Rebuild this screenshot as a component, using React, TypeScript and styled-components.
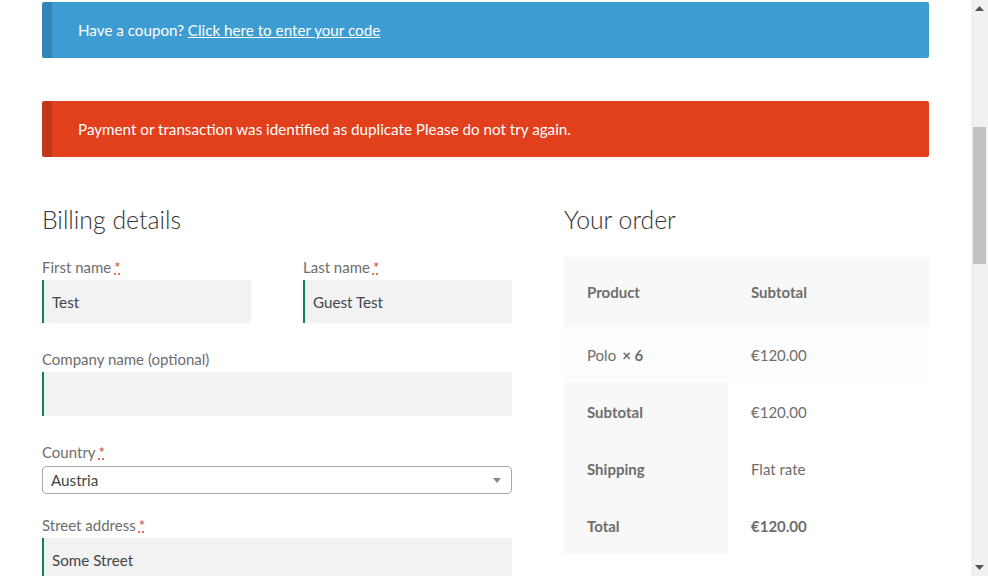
import React from "react";
import styled, { createGlobalStyle } from "styled-components";

const Global = createGlobalStyle`
  html, body { margin: 0; padding: 0; height: 100%; overflow: hidden; background: #fff; }
  body { font-family: Lato, "Liberation Sans", sans-serif; color: #6d6d6d; font-size: 15px; }
  #root { height: 100%; }
`;

const Shell = styled.div`
  display: flex;
  height: 576px;
  width: 988px;
`;

const Page = styled.main`
  flex: 1;
  padding: 2px 42px 0 42px;
  overflow: hidden;
`;

const ScrollTrack = styled.div`
  width: 17px;
  background: #f1f1f1;
  display: flex;
  flex-direction: column;
  align-items: center;
`;

const ScrollArrow = styled.div`
  height: 17px;
  width: 17px;
  display: flex;
  align-items: center;
  justify-content: center;
`;

const ScrollSpace = styled.div<{ $h: number }>`
  height: ${(p) => p.$h}px;
  flex: ${(p) => (p.$h ? "none" : 1)};
`;

const ScrollThumb = styled.div`
  width: 13px;
  height: 137px;
  background: #c1c1c1;
`;

const Notice = styled.div<{ $tone: "info" | "error" }>`
  background: ${(p) => (p.$tone === "info" ? "#3d9cd2" : "#e2401c")};
  border-left: 10px solid ${(p) => (p.$tone === "info" ? "#3485b3" : "#c0361a")};
  border-radius: 2px;
  color: #fff;
  height: 56px;
  box-sizing: border-box;
  padding: 0 26px;
  display: flex;
  align-items: center;
  font-size: 15.2px;
  margin-bottom: ${(p) => (p.$tone === "info" ? "43px" : "0")};
  a { color: #fff; text-decoration: underline; }
`;

const Columns = styled.div`
  display: flex;
  gap: 52px;
  margin-top: 46px;
`;

const BillingCol = styled.section`
  width: 470px;
`;

const OrderCol = styled.section`
  width: 365px;
`;

const Heading = styled.h3`
  margin: 0 0 18px 0;
  font-weight: 300;
  font-size: 24.8px;
  line-height: 33px;
  color: #333333;
`;

const RowPair = styled.div`
  display: flex;
  justify-content: space-between;
`;

const Field = styled.div<{ $w?: number; $mb?: number }>`
  width: ${(p) => (p.$w ? `${p.$w}px` : "100%")};
  margin-bottom: ${(p) => (p.$mb ?? 23)}px;
`;

const Label = styled.label`
  display: block;
  line-height: 26px;
  font-size: 15px;
  color: #6d6d6d;
`;

const Req = styled.abbr`
  color: #e2401c;
  text-decoration: underline dotted;
  margin-left: 3px;
  cursor: help;
`;

const Input = styled.div<{ $h?: number }>`
  height: ${(p) => p.$h ?? 43}px;
  background: #f2f2f2;
  box-shadow: inset 2px 0 0 #0f834d;
  color: #43454b;
  padding-left: 10px;
  display: flex;
  align-items: center;
  font-size: 15.2px;
`;

const Select = styled.div`
  margin-top: 1px;
  height: 28px;
  box-sizing: border-box;
  border: 1px solid #aaa;
  border-radius: 4px;
  background: #fff;
  color: #444;
  padding: 0 8px;
  display: flex;
  align-items: center;
  justify-content: space-between;
  font-size: 15.2px;
`;

const Caret = styled.span`
  width: 0;
  height: 0;
  border-left: 4px solid transparent;
  border-right: 4px solid transparent;
  border-top: 5px solid #888;
  margin-right: 2px;
`;

const Table = styled.table`
  width: 365px;
  border-collapse: collapse;
  margin-top: 21px;
  font-size: 15px;
  color: #6d6d6d;
`;

const HeadCell = styled.th<{ $w?: number }>`
  background: #f8f8f8;
  text-align: left;
  font-weight: 700;
  height: 69px;
  padding: 0 23px;
  width: ${(p) => (p.$w ? `${p.$w}px` : "auto")};
  box-sizing: border-box;
`;

const BodyCell = styled.td<{ $bold?: boolean }>`
  background: #fdfdfd;
  height: 57px;
  padding: 0 23px;
  font-weight: ${(p) => (p.$bold ? 700 : 400)};
`;

const FootHead = styled.th`
  background: #f8f8f8;
  text-align: left;
  font-weight: 700;
  height: 57px;
  padding: 0 23px;
`;

const FootCell = styled.td<{ $bold?: boolean }>`
  background: #fff;
  padding: 0 23px;
  font-weight: ${(p) => (p.$bold ? 700 : 400)};
`;

const Qty = styled.strong`
  margin-left: 6px;
  font-weight: 700;
`;

export default function App() {
  return (
    <>
      <Global />
      <Shell>
        <Page>
          <Notice $tone="info">
            <span>
              Have a coupon? <a href="#">Click here to enter your code</a>
            </span>
          </Notice>
          <Notice $tone="error">
            Payment or transaction was identified as duplicate Please do not try again.
          </Notice>
          <Columns>
            <BillingCol>
              <Heading>Billing details</Heading>
              <RowPair>
                <Field $w={209}>
                  <Label>
                    First name<Req title="required">*</Req>
                  </Label>
                  <Input>Test</Input>
                </Field>
                <Field $w={209}>
                  <Label>
                    Last name<Req title="required">*</Req>
                  </Label>
                  <Input>Guest Test</Input>
                </Field>
              </RowPair>
              <Field>
                <Label>Company name (optional)</Label>
                <Input $h={44} />
              </Field>
              <Field $mb={18}>
                <Label>
                  Country<Req title="required">*</Req>
                </Label>
                <Select>
                  <span>Austria</span>
                  <Caret />
                </Select>
              </Field>
              <Field>
                <Label>
                  Street address<Req title="required">*</Req>
                </Label>
                <Input $h={44}>Some Street</Input>
              </Field>
            </BillingCol>
            <OrderCol>
              <Heading>Your order</Heading>
              <Table>
                <thead>
                  <tr>
                    <HeadCell $w={164}>Product</HeadCell>
                    <HeadCell>Subtotal</HeadCell>
                  </tr>
                </thead>
                <tbody>
                  <tr>
                    <BodyCell>
                      Polo<Qty>× 6</Qty>
                    </BodyCell>
                    <BodyCell>€120.00</BodyCell>
                  </tr>
                </tbody>
                <tfoot>
                  <tr>
                    <FootHead>Subtotal</FootHead>
                    <FootCell>€120.00</FootCell>
                  </tr>
                  <tr>
                    <FootHead>Shipping</FootHead>
                    <FootCell>Flat rate</FootCell>
                  </tr>
                  <tr>
                    <FootHead>Total</FootHead>
                    <FootCell $bold>€120.00</FootCell>
                  </tr>
                </tfoot>
              </Table>
            </OrderCol>
          </Columns>
        </Page>
        <ScrollTrack>
          <ScrollArrow>
            <svg width="9" height="5" viewBox="0 0 9 5">
              <path d="M0 5 L4.5 0 L9 5 Z" fill="#505050" />
            </svg>
          </ScrollArrow>
          <ScrollSpace $h={110} />
          <ScrollThumb />
          <ScrollSpace $h={0} />
          <ScrollArrow>
            <svg width="9" height="5" viewBox="0 0 9 5">
              <path d="M0 0 L9 0 L4.5 5 Z" fill="#505050" />
            </svg>
          </ScrollArrow>
        </ScrollTrack>
      </Shell>
    </>
  );
}
